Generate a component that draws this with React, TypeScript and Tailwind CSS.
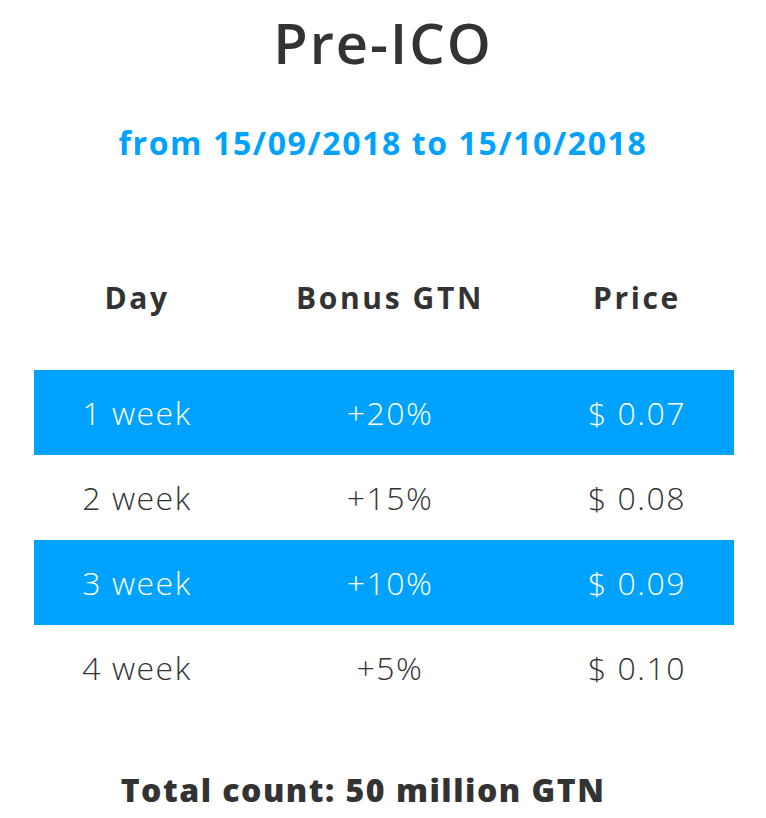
const rows = [
  { day: "1 week", bonus: "+20%", price: "$ 0.07", hl: true },
  { day: "2 week", bonus: "+15%", price: "$ 0.08", hl: false },
  { day: "3 week", bonus: "+10%", price: "$ 0.09", hl: true },
  { day: "4 week", bonus: "+5%", price: "$ 0.10", hl: false },
];

export default function App() {
  return (
    <div className="w-[766px] h-[818px] bg-white text-[#333333] font-['Open_Sans',sans-serif] flex flex-col items-center">
      <h1 className="mt-[10px] text-[56px] leading-[64px] font-semibold tracking-[2px]">Pre-ICO</h1>
      <p className="mt-[49px] text-[32px] leading-[40px] font-bold tracking-[1.6px] text-[#00a2ff]">
        from 15/09/2018 to 15/10/2018
      </p>

      {/* Table */}
      <div className="mt-[107px] w-[700px] ml-[2px]">
        <div className="grid grid-cols-[206px_300px_194px] h-[54px] items-center text-[30px] font-bold tracking-[2.6px] text-center">
          <span>Day</span>
          <span>Bonus GTN</span>
          <span>Price</span>
        </div>
        <div className="mt-[46px]">
          {rows.map((r) => (
            <div
              key={r.day}
              className={
                "grid grid-cols-[206px_300px_194px] h-[85px] items-center text-[32px] font-light tracking-[1.5px] text-center " +
                (r.hl ? "bg-[#00a2ff] text-white" : "text-[#333333]")
              }
            >
              <span>{r.day}</span>
              <span>{r.bonus}</span>
              <span>{r.price}</span>
            </div>
          ))}
        </div>
      </div>

      <p className="mt-[60px] mr-[40px] text-[32px] leading-[40px] font-extrabold tracking-[1.5px]">
        Total count: 50 million GTN
      </p>
    </div>
  );
}
